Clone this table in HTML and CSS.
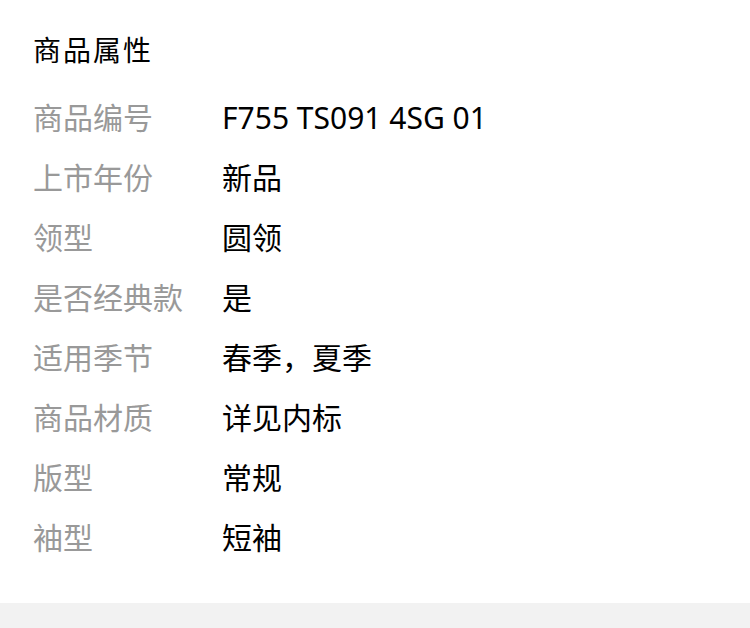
FILE: index.html
```html
<!DOCTYPE html>
<html lang="zh-CN">
  <head>
    <meta charset="utf-8" />
    <title>商品属性</title>
    <link rel="stylesheet" href="styles.css">
  </head>
  <body>
    <main class="attrs">
      <h2 class="attrs-title">商品属性</h2>
      <dl class="attrs-list">
        <dt>商品编号</dt>
        <dd>F755 TS091 4SG 01</dd>
        <dt>上市年份</dt>
        <dd>新品</dd>
        <dt>领型</dt>
        <dd>圆领</dd>
        <dt>是否经典款</dt>
        <dd>是</dd>
        <dt>适用季节</dt>
        <dd>春季，夏季</dd>
        <dt>商品材质</dt>
        <dd>详见内标</dd>
        <dt>版型</dt>
        <dd>常规</dd>
        <dt>袖型</dt>
        <dd>短袖</dd>
      </dl>
    </main>
    <div class="band"></div>
  </body>
</html>
```

FILE: styles.css
```css
html,
body {
  margin: 0;
  background: #fff;
  font-family: 'Noto Sans', 'Noto Sans CJK SC', sans-serif;
}

.attrs {
  padding: 20px 20px 35px 33px;
}

.attrs-title {
  margin: 0;
  font-size: 28px;
  font-weight: normal;
  line-height: 60px;
  letter-spacing: 2px;
  color: #000;
}

.attrs-list {
  display: grid;
  grid-template-columns: 189px 1fr;
  margin: 8px 0 0;
  font-size: 30px;
  line-height: 60px;
}

.attrs-list dt {
  color: #999;
}

.attrs-list dd {
  margin: 0;
  color: #000;
}

.band {
  height: 25px;
  background: #f2f2f2;
}
```
